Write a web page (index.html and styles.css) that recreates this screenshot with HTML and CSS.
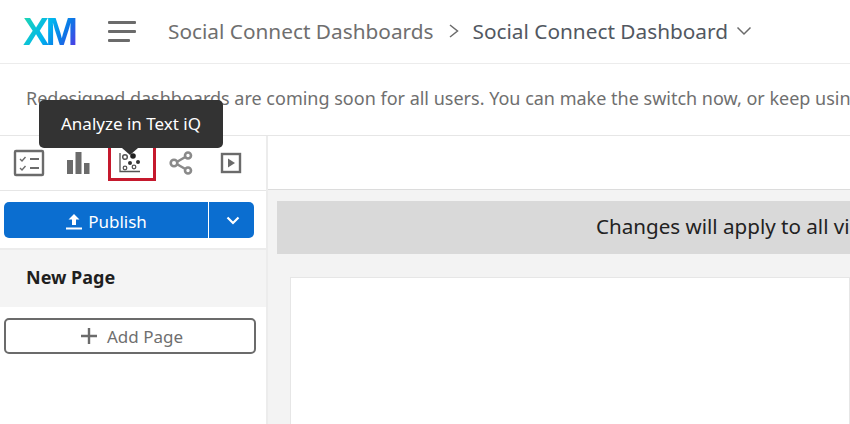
FILE: index.html
```html
<!DOCTYPE html>
<html lang="en">
<head>
  <meta charset="UTF-8">
  <meta name="viewport" content="width=device-width, initial-scale=1.0">
  <title>Social Connect Dashboard</title>
  <link rel="stylesheet" href="styles.css">
</head>
<body>

  <header class="header">
    <span class="logo">XM</span>
    <button class="menu-btn" aria-label="Menu"><span></span><span></span><span></span></button>
    <nav class="crumbs">
      <span class="crumb-parent">Social Connect Dashboards</span>
      <svg class="crumb-sep" width="12" height="16" viewBox="0 0 12 16"><path d="M2 2l7.500 6L2 14" fill="none" stroke="#6b6b6b" stroke-width="1.500"/></svg>
      <span class="crumb-current">Social Connect Dashboard</span>
      <svg class="crumb-caret" width="16" height="10" viewBox="0 0 16 10"><path d="M1.500 1.500L8 8l6.500-6.500" fill="none" stroke="#6b6b6b" stroke-width="1.500"/></svg>
    </nav>
  </header>

  <div class="notice">Redesigned dashboards are coming soon for all users. You can make the switch now, or keep using the current version until then.</div>

  <div class="main">
    <aside class="sidebar">
      <div class="tools">
        <svg class="tool" width="32" height="28" viewBox="0 0 32 28" fill="none" stroke="#6b6b6b">
          <rect x="2" y="2" width="28" height="24" rx="1" stroke-width="2.400"/>
          <path d="M7 10l2 2 3.500-4M7 19l2 2 3.500-4" stroke-width="1.400"/>
          <path d="M17 10h9M17 19h9" stroke-width="2.200"/>
        </svg>
        <svg class="tool" width="24" height="24" viewBox="0 0 24 24" fill="#6b6b6b">
          <rect x="1" y="9" width="6" height="14"/><rect x="9.500" y="1" width="6" height="22"/><rect x="18" y="12" width="5.500" height="11"/>
        </svg>
        <span class="tool-active">
          <svg width="22" height="22" viewBox="0 0 22 22" fill="none" stroke="#555">
            <path d="M1 1v18.500h20" stroke-width="1.300"/>
            <circle cx="6" cy="5" r="2.300" stroke-width="1.500"/>
            <circle cx="14" cy="4" r="2.800" fill="#222" stroke="none"/>
            <circle cx="11" cy="11" r="2" fill="#333" stroke="none"/>
            <circle cx="19" cy="10" r="2" fill="#333" stroke="none"/>
            <circle cx="6" cy="16" r="1.800" stroke-width="1.300"/>
            <circle cx="15" cy="15" r="1.800" stroke-width="1.300"/>
          </svg>
        </span>
        <svg class="tool" width="24" height="24" viewBox="0 0 24 24" fill="none" stroke="#8a8a8a" stroke-width="2.600">
          <path d="M6 12L18 5M6 12l12 7"/>
          <circle cx="5" cy="12" r="3.300" fill="#fff"/><circle cx="19" cy="4.500" r="3" fill="#fff"/><circle cx="19" cy="19.500" r="3" fill="#fff"/>
        </svg>
        <svg class="tool" width="22" height="22" viewBox="0 0 22 22">
          <rect x="2" y="2" width="18" height="18" fill="none" stroke="#6b6b6b" stroke-width="2.400"/>
          <path d="M8 6.500l7 4.500-7 4.500z" fill="#6b6b6b"/>
        </svg>
        <div class="tooltip">Analyze in Text iQ</div>
      </div>

      <div class="publish-wrap">
        <div class="publish">
          <span class="publish-main">
            <svg width="18" height="18" viewBox="0 0 18 18" fill="#fff"><path d="M9 1L3.500 6.500h3.500V12h4V6.500h3.500zM1 14.500h16v2H1z"/></svg>
            Publish
          </span>
          <span class="publish-more">
            <svg width="14" height="9" viewBox="0 0 14 9"><path d="M1.500 1.500L7 7l5.500-5.500" fill="none" stroke="#fff" stroke-width="2.200"/></svg>
          </span>
        </div>
      </div>

      <div class="page-item">New Page</div>

      <button class="add-page">
        <svg width="18" height="18" viewBox="0 0 18 18"><path d="M9 1v16M1 9h16" stroke="#6b6b6b" stroke-width="2.400"/></svg>
        Add Page
      </button>
    </aside>

    <section class="content">
      <div class="content-top"></div>
      <div class="banner"><span class="banner-text">Changes will apply to all viewers of this dashboard</span></div>
      <div class="canvas"></div>
    </section>
  </div>

</body>
</html>
```

FILE: styles.css
```css
* {
  box-sizing: border-box;
}

html,
body {
  margin: 0;
  height: 100%;
  overflow: hidden;
}

body {
  width: 850px;
  height: 424px;
  font-family: "Noto Sans", Arial, sans-serif;
  background-color: #fff;
  display: flex;
  flex-direction: column;
}

.header {
  height: 64px;
  flex: none;
  display: flex;
  align-items: center;
  border-bottom: 1px solid #ececec;
  padding-left: 23px;
}

.logo {
  width: 53px;
  font-family: "Liberation Sans", Arial, sans-serif;
  font-size: 39px;
  font-weight: bold;
  letter-spacing: -3.5px;
  line-height: 40px;
  background: linear-gradient(120deg, #21dbaa 0%, #00b4ef 45%, #0b78e6 70%, #5f2ee5 100%);
  -webkit-background-clip: text;
  background-clip: text;
  color: transparent;
}

.menu-btn {
  margin-left: 32px;
  width: 28px;
  padding: 0;
  border: none;
  background: none;
  display: flex;
  flex-direction: column;
  gap: 6px;
}

.menu-btn span {
  display: block;
  height: 3px;
  width: 28px;
  background-color: #6b6b6b;
  border-radius: 1px;
}

.menu-btn span:last-child {
  width: 22px;
}

.crumbs {
  margin: 0 0 2px 32px;
  display: flex;
  align-items: center;
  font-size: 20.8px;
  white-space: nowrap;
}

.crumb-parent {
  color: #6f6f6f;
}

.crumb-sep {
  margin: 0 12px 0 15px;
}

.crumb-current {
  color: #525861;
}

.crumb-caret {
  margin-left: 8px;
}

.notice {
  height: 72px;
  flex: none;
  padding: 22px 0 0 26px;
  font-size: 18px;
  line-height: 24px;
  color: #6f6f6f;
  white-space: nowrap;
  overflow: hidden;
  border-bottom: 1px solid #e6e6e6;
}

.main {
  flex: 1;
  display: flex;
  min-height: 0;
}

.sidebar {
  width: 268px;
  flex: none;
  border-right: 2px solid #ececec;
}

.tools {
  position: relative;
  height: 55px;
  display: flex;
  align-items: center;
  padding-left: 13px;
  border-bottom: 1px solid #e6e6e6;
}

.tools .tool:nth-child(1) {
  margin-right: 21px;
}

.tools .tool:nth-child(4) {
  margin-left: 13px;
  margin-right: 27px;
}

.tool-active {
  margin-left: 18px;
  width: 48px;
  height: 36px;
  padding-right: 4px;
  border: 3px solid #c5192d;
  display: flex;
  align-items: center;
  justify-content: center;
}

.tooltip {
  position: absolute;
  left: 39px;
  top: -36px;
  width: 184px;
  height: 48px;
  background-color: #333;
  border-radius: 5px;
  color: #fff;
  font-size: 17px;
  line-height: 48px;
  text-align: center;
}

.tooltip::after {
  content: "";
  position: absolute;
  left: 83px;
  top: 100%;
  border-left: 8px solid transparent;
  border-right: 8px solid transparent;
  border-top: 7px solid #333;
}

.publish-wrap {
  height: 59px;
  padding: 11px 0 0 4px;
  border-bottom: 2px solid #ececec;
}

.publish {
  width: 250px;
  height: 36px;
  display: flex;
  background-color: #0b6ed0;
  border-radius: 5px;
  color: #fff;
  font-size: 17px;
}

.publish-main {
  flex: 1;
  display: flex;
  align-items: center;
  justify-content: center;
  gap: 5px;
  padding-top: 3px;
}

.publish-more {
  width: 46px;
  display: flex;
  align-items: center;
  justify-content: center;
  padding: 1px 0 0 3px;
  border-left: 1px solid #fff;
}

.page-item {
  height: 57px;
  background-color: #f4f4f4;
  padding-left: 26px;
  font-size: 18px;
  font-weight: bold;
  line-height: 54px;
  color: #1f1f1f;
}

.add-page {
  margin: 11px 0 0 4px;
  width: 252px;
  height: 36px;
  display: flex;
  align-items: center;
  justify-content: center;
  gap: 9px;
  padding-left: 9px;
  font-family: inherit;
  font-size: 17px;
  color: #6f6f6f;
  background-color: #fff;
  border: 2px solid #6b6b6b;
  border-radius: 5px;
}

.content {
  flex: 1;
  min-width: 0;
  background-color: #f3f3f3;
  overflow: hidden;
}

.content-top {
  height: 54px;
  background-color: #fff;
  border-bottom: 1px solid #dcdcdc;
}

.banner {
  margin: 11px 0 0 9px;
  height: 53px;
  width: 800px;
  background-color: #d9d9d9;
  padding-left: 319px;
  font-size: 20.6px;
  line-height: 51px;
  color: #222;
  white-space: nowrap;
}

.canvas {
  margin: 23px 0 0 22px;
  height: 200px;
  background-color: #fff;
  border: 1px solid #e6e6e6;
}
```
